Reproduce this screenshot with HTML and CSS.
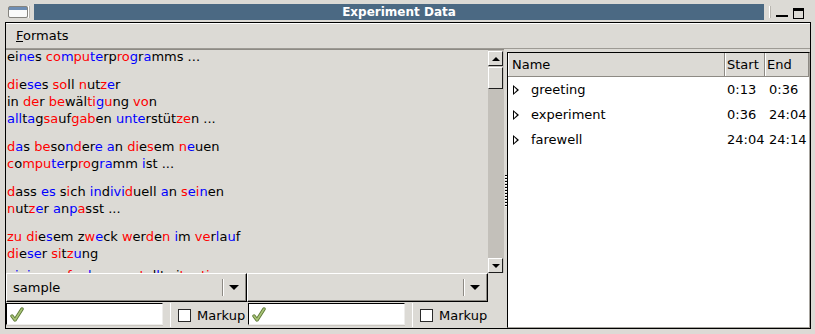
FILE: index.html
```html
<!DOCTYPE html>
<html lang="de">
<head>
    <meta charset="UTF-8">
    <title>Experiment Data</title>
    <link rel="stylesheet" href="styles.css">
</head>
<body>
    <div class="window">
        <div class="titlebar">
            <span class="wm-icon"></span>
            <span class="wm-sep"></span>
            <div class="title">Experiment Data</div>
            <span class="wm-sep right"></span>
            <span class="wm-min"></span>
            <span class="wm-max"></span>
        </div>

        <div class="client">
            <div class="menubar">
                <span class="menu-item"><u>F</u>ormats</span>
            </div>

            <div class="panes">
                <div class="left-pane">
                    <div class="scrolled">
                        <div class="text-view">
                            <div class="text-scroll">
                                <p>ei<b>ne</b>s <i>co</i><b>m</b><i>pu</i><b>te</b>rp<i>ro</i><b>g</b>r<b>a</b>mms ...</p>
                                <p><i>di</i>e<b>se</b>s <i>so</i>ll <i>n</i>ut<i>z</i><b>e</b>r<br>
                                   in <i>de</i>r <i>be</i>wäl<i>ti</i><b>g</b><i>u</i>ng <i>vo</i>n<br>
                                   <b>all</b>t<b>a</b>g<i>sa</i>uf<i>gab</i>en <b>unte</b>rstüt<i>ze</i>n ...</p>
                                <p><i>d</i><b>a</b>s <i>be</i>so<b>n</b><i>d</i>er<b>e</b> <b>a</b>n <i>di</i>e<i>s</i>em <i>n</i><b>e</b>uen<br>
                                   <i>c</i>o<i>mpu</i><b>te</b>rp<i>ro</i>g<b>ra</b>mm <b>i</b>st ...</p>
                                <p><i>d</i>ass <b>es</b> s<i>i</i>ch <b>in</b>d<b>ivi</b><i>d</i>uell <b>a</b>n <i>s</i><b>e</b><i>i</i><b>n</b>en<br>
                                   <i>n</i>ut<i>z</i><b>e</b>r <b>a</b>n<b>p</b><i>a</i>sst ...</p>
                                <p class="last-shown"><i>zu</i> <i>di</i>e<b>s</b>em z<i>w</i><b>e</b>ck <i>w</i>er<i>d</i>e<i>n</i> <b>i</b>m <i>ve</i>r<b>l</b>a<b>u</b>f<br>
                                   <i>di</i>e<b>se</b>r <i>si</i>t<i>z</i><b>u</b>ng</p>
                                <p><b>ei</b>n<b>i</b>ge <b>a</b>u<i>f</i>ga<b>b</b>en ges<i>t</i>el<b>l</b>t <b>s</b>i<i>t</i>u<i>ati</i><b>o</b>n</p>
                            </div>
                        </div>
                        <div class="vscroll">
                            <div class="sb-btn"><span class="arrow-up"></span></div>
                            <div class="sb-trough"><div class="sb-thumb"></div></div>
                            <div class="sb-btn"><span class="arrow-down"></span></div>
                        </div>
                    </div>

                    <div class="combo-row">
                        <div class="combo">
                            <span class="combo-text">sample</span>
                            <span class="combo-sep"></span>
                            <span class="arrow-down big"></span>
                        </div>
                        <div class="combo">
                            <span class="combo-text"></span>
                            <span class="combo-sep"></span>
                            <span class="arrow-down big"></span>
                        </div>
                    </div>

                    <div class="entry-row">
                        <div class="entry">
                            <svg class="tick" width="14" height="15" viewBox="0 0 14 15">
                                <path d="M2 9 L5 13 L12 2" fill="none" stroke="#5e7a38" stroke-width="3.4" stroke-linejoin="round" stroke-linecap="round"/>
                                <path d="M2 9 L5 13 L12 2" fill="none" stroke="#a9c477" stroke-width="1.6" stroke-linejoin="round" stroke-linecap="round"/>
                            </svg>
                        </div>
                        <label class="check"><span class="box"></span>Markup</label>
                        <div class="entry">
                            <svg class="tick" width="14" height="15" viewBox="0 0 14 15">
                                <path d="M2 9 L5 13 L12 2" fill="none" stroke="#5e7a38" stroke-width="3.4" stroke-linejoin="round" stroke-linecap="round"/>
                                <path d="M2 9 L5 13 L12 2" fill="none" stroke="#a9c477" stroke-width="1.6" stroke-linejoin="round" stroke-linecap="round"/>
                            </svg>
                        </div>
                        <label class="check"><span class="box"></span>Markup</label>
                    </div>
                </div>

                <div class="handle"><span class="grip"></span></div>

                <div class="right-pane">
                    <div class="tree">
                        <div class="tree-head">
                            <span class="col-name">Name</span>
                            <span class="col-start">Start</span>
                            <span class="col-end">End</span>
                        </div>
                        <div class="tree-row">
                            <span class="col-name"><span class="expander"></span>greeting</span>
                            <span class="col-start">0:13</span>
                            <span class="col-end">0:36</span>
                        </div>
                        <div class="tree-row">
                            <span class="col-name"><span class="expander"></span>experiment</span>
                            <span class="col-start">0:36</span>
                            <span class="col-end">24:04</span>
                        </div>
                        <div class="tree-row">
                            <span class="col-name"><span class="expander"></span>farewell</span>
                            <span class="col-start">24:04</span>
                            <span class="col-end">24:14</span>
                        </div>
                    </div>
                </div>
            </div>
        </div>
    </div>
</body>
</html>
```

FILE: styles.css
```css
body {
    margin: 0;
    background: #dcdad5;
    font-family: "DejaVu Sans", sans-serif;
    font-size: 13px;
    color: #000;
}

.window {
    width: 815px;
    height: 334px;
    background: #dcdad5;
    overflow: hidden;
}

/* window manager frame */
.titlebar {
    height: 22px;
    display: flex;
    align-items: flex-start;
}

.wm-icon {
    width: 18px;
    height: 10px;
    margin: 6px 0 0 8px;
    border: 1px solid #85837e;
    border-radius: 2px;
    background: linear-gradient(#6e8db3 0 3px, #fafafa 3px);
}

.wm-sep {
    width: 1px;
    height: 12px;
    margin-top: 6px;
    background: #fff;
    border-right: 1px solid #b9b6b0;
}

.wm-sep.right {
    margin-left: 5px;
}

.title {
    width: 730px;
    height: 16px;
    margin: 4px 0 0 4px;
    background: #4b6983;
    color: #fff;
    font-size: 12px;
    font-weight: bold;
    line-height: 16px;
    text-align: center;
}

.wm-min {
    width: 12px;
    height: 2px;
    margin: 15px 0 0 5px;
    background: #000;
}

.wm-max {
    width: 9px;
    height: 7px;
    margin: 8px 0 0 5px;
    border: 1px solid #000;
    border-top-width: 3px;
}

.client {
    margin-left: 5px;
    width: 804px;
    height: 305px;
    border: 1px solid #000;
}

.menubar {
    height: 24px;
    border-top: 1px solid #fff;
    border-bottom: 1px solid #9d9a94;
    line-height: 24px;
}

.menu-item {
    padding-left: 10px;
}

.panes {
    display: flex;
    height: 279px;
}

/* left side: text view and controls */
.left-pane {
    width: 498px;
    display: flex;
    flex-direction: column;
}

.scrolled {
    height: 223px;
    display: flex;
    border-top: 1px solid #8d8a84;
}

.text-view {
    flex: 1;
    overflow: hidden;
    padding-left: 1px;
}

.text-scroll {
    margin-top: -2px;
    line-height: 17px;
}

.text-view p {
    margin: 0 0 11px;
}

.text-view p.last-shown {
    margin-bottom: 5px;
}

.text-view i {
    font-style: normal;
    color: #f00;
}

.text-view b {
    font-weight: normal;
    color: #00f;
}

.vscroll {
    width: 16px;
    display: flex;
    flex-direction: column;
    background: #c3c0ba;
    padding-top: 1px;
}

.sb-btn {
    height: 13px;
    width: 13px;
    border: 1px solid;
    border-color: #fff #1e1e1e #1e1e1e #fff;
    background: #dcdad5;
    display: flex;
    align-items: center;
    justify-content: center;
}

.sb-trough {
    flex: 1;
}

.sb-thumb {
    height: 20px;
    width: 13px;
    margin-top: 1px;
    border: 1px solid;
    border-color: #fff #1e1e1e #1e1e1e #fff;
    background: #dcdad5;
}

.arrow-up {
    border: 4px solid transparent;
    border-bottom: 4px solid #000;
    border-top-width: 0;
}

.arrow-down {
    border: 4px solid transparent;
    border-top: 4px solid #000;
    border-bottom-width: 0;
}

.arrow-down.big {
    border-width: 5px 5px 0;
}

.combo-row {
    height: 29px;
    display: flex;
    padding-right: 16px;
}

.combo {
    flex: 1;
    display: flex;
    align-items: center;
    border: 1px solid;
    border-color: #fff #000 #000 #fff;
    box-shadow: inset -1px -1px 0 #8d8a84;
    padding-right: 7px;
}

.combo-text {
    flex: 1;
    padding-left: 6px;
}

.combo-sep {
    width: 1px;
    height: 17px;
    background: #8d8a84;
    border-right: 1px solid #fff;
    margin-right: 5px;
}

.entry-row {
    height: 25px;
    padding-top: 1px;
    display: grid;
    grid-template-columns: 157px 85px 157px 1fr;
}

.entry {
    height: 20px;
    background: #fff;
    border: 1px solid;
    border-color: #000 #eeedeb #eeedeb #000;
    box-shadow: 0 1px 0 #c9c6c0;
    padding-left: 3px;
    display: flex;
    align-items: center;
}

.check {
    display: flex;
    align-items: center;
    height: 24px;
    padding-left: 7px;
    border-left: 1px solid #fff;
    margin-left: 7px;
    white-space: nowrap;
}

.box {
    flex: none;
    width: 11px;
    height: 11px;
    border: 1px solid #2a2a2a;
    background: #fff;
    margin-right: 6px;
}

/* paned handle */
.handle {
    width: 3px;
    position: relative;
}

.grip {
    position: absolute;
    left: 1px;
    top: 126px;
    width: 2px;
    height: 32px;
    background: repeating-linear-gradient(#000 0 1px, #fff 1px 2px, transparent 2px 3px);
}

/* right side: tree view */
.right-pane {
    width: 303px;
    padding-top: 3px;
}

.tree {
    height: 274px;
    background: #fff;
    border: 1px solid;
    border-color: #000 #a7a49e #a7a49e #000;
}

.tree-head,
.tree-row {
    display: flex;
}

.tree-head {
    height: 23px;
    background: #dcdad5;
    border-bottom: 1px solid #8d8a84;
    line-height: 23px;
}

.tree-row {
    height: 25px;
    line-height: 25px;
}

.col-name {
    width: 212px;
    padding-left: 4px;
    display: flex;
    align-items: center;
}

.col-start {
    width: 37px;
    padding-left: 3px;
}

.col-end {
    flex: 1;
    padding-left: 3px;
}

.tree-head span {
    border-right: 1px solid #8d8a84;
    box-shadow: inset 1px 0 0 #fff;
}

.tree-head .col-start,
.tree-head .col-end {
    padding-left: 2px;
}

.tree-row .col-name {
    padding-left: 5px;
    width: 211px;
}

.tree-row .col-start {
    padding-left: 3px;
    width: 38px;
}

.tree-row .col-end {
    padding-left: 4px;
}

.expander {
    width: 0;
    height: 0;
    border: 5px solid transparent;
    border-left: 6px solid #000;
    border-right-width: 0;
    margin-right: 12px;
    position: relative;
}

.expander::after {
    content: "";
    position: absolute;
    left: -5px;
    top: -3px;
    border: 3px solid transparent;
    border-left: 3px solid #fff;
    border-right-width: 0;
}
```
